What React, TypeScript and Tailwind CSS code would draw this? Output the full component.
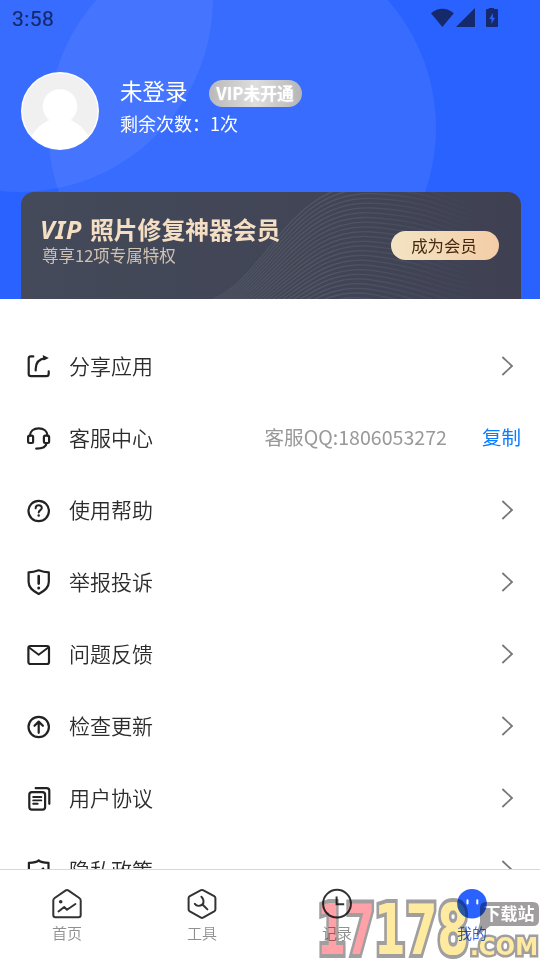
import React from "react";

type MenuItem = {
  label: string;
  icon: React.ReactNode;
  info?: string;
  action?: string;
};

type Tab = {
  label: string;
  icon: React.ReactNode;
  active?: boolean;
};

const Icon = ({ children }: { children: React.ReactNode }) => (
  <svg
    width="26"
    height="26"
    viewBox="0.3 0 26 26"
    fill="none"
    stroke="#222"
    strokeWidth="2.2"
    strokeLinecap="round"
    strokeLinejoin="round"
    className="shrink-0"
  >
    {children}
  </svg>
);

const menu: MenuItem[] = [
  {
    label: "分享应用",
    icon: (
      <Icon>
        <path d="M7.6 3.4H5.2Q3 3.4 3 5.6V21Q3 23.2 5.4 23.2H20.6Q23 23.2 23 20.8V18.4" />
        <path d="M10 17.4V16C10 10 13.5 6 20 5.2" />
        <path d="M17 2L23.2 5L17.8 7.6Z" fill="#222" stroke="none" />
      </Icon>
    ),
  },
  {
    label: "客服中心",
    info: "客服QQ:1806053272",
    action: "复制",
    icon: (
      <Icon>
        <path d="M4.2 10.8C4.4 6.2 8 3.4 13 3.4S21.6 6.2 21.8 10.8" />
        <rect x="2.4" y="10.6" width="5" height="7.4" rx="1.4" />
        <rect x="18.2" y="10.6" width="5.2" height="7.4" rx="1.4" />
        <path d="M20.8 18.4C20.4 22 17 23.6 10.5 23.6" />
      </Icon>
    ),
  },
  {
    label: "使用帮助",
    icon: (
      <Icon>
        <circle cx="13" cy="14" r="10.2" />
        <path
          d="M9.9 11.4C9.9 9.4 11.3 8.3 13 8.3S16.1 9.4 16.1 11.1C16.1 13.1 13 13.2 13 15.6"
          strokeWidth="1.9"
        />
        <circle cx="13" cy="18.5" r="1.2" fill="#222" stroke="none" />
      </Icon>
    ),
  },
  {
    label: "举报投诉",
    icon: (
      <Icon>
        <path d="M13 1.3Q18 3.2 23.1 3.3V13C23.1 18.5 19.5 21.5 13 25C6.5 21.5 2.9 18.5 2.9 13V3.3Q8 3.2 13 1.3Z" />
        <path d="M13 7V14.6" strokeWidth="2.6" />
        <circle cx="13" cy="19" r="1.5" fill="#222" stroke="none" />
      </Icon>
    ),
  },
  {
    label: "问题反馈",
    icon: (
      <Icon>
        <rect x="2.7" y="5" width="20.6" height="18" rx="2" />
        <path d="M3.4 6.6L13 13.8L22.6 6.6" strokeWidth="1.9" />
      </Icon>
    ),
  },
  {
    label: "检查更新",
    icon: (
      <Icon>
        <circle cx="13" cy="14" r="10.2" />
        <path d="M13 19.8V9M8.8 12.8L13 8.6L17.2 12.8" />
      </Icon>
    ),
  },
  {
    label: "用户协议",
    icon: (
      <Icon>
        <rect x="3.6" y="7.2" width="15.8" height="17.4" rx="2.6" />
        <path d="M10 3.2H21Q23.6 3.2 23.6 5.8V18.8" />
        <path d="M7.5 12H15.6M7.5 15.4H15.6M7.5 18.8H12" strokeWidth="1.9" />
      </Icon>
    ),
  },
  {
    label: "隐私政策",
    icon: (
      <Icon>
        <path d="M13 3.4Q15.4 5.8 22.8 5.8V15C22.8 19 19 22 13 24.5C7 22 3.2 19 3.2 15V5.8Q10.6 5.8 13 3.4Z" />
        <path d="M8.5 14L12 17L17.5 11.5" />
      </Icon>
    ),
  },
];

const TabIcon = ({ children }: { children: React.ReactNode }) => (
  <svg
    width="32"
    height="32"
    viewBox="0 0 32 32"
    fill="none"
    stroke="#333"
    strokeWidth="2"
    strokeLinecap="round"
    strokeLinejoin="round"
  >
    {children}
  </svg>
);

const tabs: Tab[] = [
  {
    label: "首页",
    icon: (
      <TabIcon>
        <path d="M2.3 12.6Q2.3 11 3.7 10L14.4 2.6Q16 1.6 17.6 2.6L28.3 10Q29.7 11 29.7 12.6V27Q29.7 29.2 27.5 29.2H4.5Q2.3 29.2 2.3 27Z" />
        <circle cx="9.7" cy="13.8" r="1.8" fill="#333" stroke="none" />
        <path d="M7.5 23.5L13.2 19L16 21.8L24.4 16" />
      </TabIcon>
    ),
  },
  {
    label: "工具",
    icon: (
      <TabIcon>
        <path d="M15 2.2Q16 1.6 17 2.2L28.2 8.2Q29.4 8.9 29.4 10.1V21.5Q29.4 22.7 28.2 23.4L17 29.6Q16 30.2 15 29.6L3.8 23.4Q2.6 22.7 2.6 21.5V10.1Q2.6 8.9 3.8 8.2Z" />
        <path d="M15.4 8.8C18 11.2 18.2 15 16.2 16.6C14 18.3 10.8 18.3 8.8 15.8M17 17L21.4 21.4" />
      </TabIcon>
    ),
  },
  {
    label: "记录",
    icon: (
      <TabIcon>
        <circle cx="16" cy="15.7" r="13.9" />
        <path d="M15.6 8.5V16.2H23.2" strokeLinecap="butt" strokeLinejoin="miter" />
      </TabIcon>
    ),
  },
  {
    label: "我的",
    active: true,
    icon: (
      <TabIcon>
        <circle cx="16" cy="15.7" r="14.8" fill="#2962ff" stroke="none" />
        <path d="M11.5 12.2V15.4M21.3 12.2V15.4" stroke="#fff" />
      </TabIcon>
    ),
  },
];

const waves = Array.from({ length: 34 }, (_, i) => i);

function StatusBar() {
  return (
    <div className="flex h-9 items-center justify-between pr-[41px] pl-3 text-[#15296b]">
      <span className="pt-0.5 font-[Roboto] text-[21px] leading-none tracking-[0.4px] [-webkit-text-stroke:0.2px_#15296b]">
        3:58
      </span>
      <svg width="68" height="20" viewBox="0 0 68 20" fill="currentColor">
        <path d="M0 5.2Q11.4 -3.6 22.8 5.2L11.4 19Z" />
        <path d="M25 19L44 0V19Z" />
        <path d="M57.8 -1H63V1H66.2Q67 1 67 1.8V18.2Q67 19 66.2 19H55.8Q55 19 55 18.2V1.8Q55 1 55.8 1H57.8Z" />
        <path d="M62 5L58.3 11H60.6L60.4 16L64 9.8H61.7Z" fill="#2b62ff" />
      </svg>
    </div>
  );
}

function VipCard() {
  return (
    <div className="relative mr-[19px] ml-[21px] mt-[42px] flex h-[107px] justify-between overflow-hidden rounded-t-[13px] bg-linear-to-r from-[#444a59] to-[#3f4153]">
      <svg
        className="absolute inset-0"
        width="500"
        height="107"
        viewBox="21 192 500 107"
        fill="none"
      >
        <defs>
          <linearGradient
            id="wave"
            gradientUnits="userSpaceOnUse"
            x1="200"
            y1="0"
            x2="480"
            y2="0"
          >
            <stop offset="0" stopColor="#8b9096" stopOpacity="0.12" />
            <stop offset="0.45" stopColor="#8b9096" stopOpacity="0.24" />
            <stop offset="1" stopColor="#8b9096" stopOpacity="0" />
          </linearGradient>
        </defs>
        {waves.map((i) => (
          <path
            key={i}
            d={`M205 ${302 + i * 1.6}C${265 + i} ${286 + i * 2.4} ${285 + i} ${182 + i * 4.4} 372 ${184 + i * 4.8}S450 ${214 + i * 4.8} 520 ${208 + i * 4.8}`}
            stroke="url(#wave)"
            strokeWidth="1.3"
          />
        ))}
      </svg>
      <div className="relative pt-[22px] pl-[19px] text-[#f5dfc4]">
        <div className="flex h-[30px] items-center text-[23.8px] leading-none font-bold whitespace-nowrap">
          <span className="w-[50px] font-['Noto_Sans'] text-[25px] italic tracking-[0.8px]">VIP</span>
          <span>照片修复神器会员</span>
        </div>
        <p className="pl-[2px] text-[16.5px] leading-[22px] text-[#cfc2b3]">
          尊享12项专属特权
        </p>
      </div>
      <button className="relative mt-[39px] mr-[22px] h-[29px] w-[108px] rounded-full bg-linear-to-r from-[#f3e4c4] to-[#f4cda6] pr-0.5 text-[16.4px] leading-[29px] text-[#44280f]">
        成为会员
      </button>
    </div>
  );
}

function Header() {
  return (
    <header className="relative h-[299px] shrink-0 overflow-hidden bg-[#2a62ff]">
      <svg className="absolute inset-0" width="540" height="192">
        <circle cx="242" cy="128" r="194" fill="#fff" fillOpacity="0.065" />
        <circle cx="19" cy="-2" r="194" fill="#fff" fillOpacity="0.065" />
      </svg>
      <div className="relative">
        <StatusBar />
        <div className="mt-9 flex h-[78px] pl-[21px]">
          <svg width="78" height="78" viewBox="0 0 78 78">
            <defs>
              <clipPath id="avatar">
                <circle cx="39" cy="39" r="38" />
              </clipPath>
            </defs>
            <circle cx="39" cy="39" r="39" fill="#fff" />
            <circle cx="39" cy="39" r="37.6" fill="#f0f0f0" />
            <g clipPath="url(#avatar)" fill="#fff">
              <circle cx="39" cy="34.5" r="17.3" />
              <path d="M11 63C18 53 25 49 30 47.5H48C53 49 60 53 67 63L60 78H18Z" />
            </g>
          </svg>
          <div className="pl-[21px] text-white">
            <div className="flex h-[38px] items-start">
              <span className="text-[22.5px] leading-[36px]">未登录</span>
              <span className="mt-2 ml-[21px] flex h-[27px] w-[93px] items-center justify-center rounded-full bg-linear-to-r from-[#b9b9b9] via-[#dedede] to-[#b5b5b5] text-[16.8px] font-bold whitespace-nowrap [text-shadow:0_0_2px_#ffffff90]">
                VIP未开通
              </span>
            </div>
            <p className="text-[18px] leading-[26px]">剩余次数：1次</p>
          </div>
        </div>
        <VipCard />
      </div>
    </header>
  );
}

function Watermark() {
  return (
    <svg
      className="pointer-events-none absolute right-0 bottom-0 mix-blend-multiply"
      width="226"
      height="62"
      viewBox="0 0 226 62"
      stroke="#a09e9e"
      strokeLinejoin="miter"
      fontFamily="'DejaVu Sans', sans-serif"
      fontWeight="700"
    >
      <path
        d="M172 4H219Q225 4 225 10V22Q225 28 219 28H176L162 39L166 24V10Q166 4 172 4Z"
        fill="#a09e9e"
        stroke="none"
      />
      <g fontSize="69" strokeWidth="8" paintOrder="stroke">
        <text x="3" y="56" textLength="58" lengthAdjust="spacingAndGlyphs" fill="#ffa1a7">
          17
        </text>
        <text x="60" y="56" textLength="95" lengthAdjust="spacingAndGlyphs" fill="#ffeba0">
          178
        </text>
      </g>
      <text
        x="156"
        y="57"
        fontSize="25"
        strokeWidth="5"
        paintOrder="stroke"
        textLength="68"
        lengthAdjust="spacingAndGlyphs"
        fill="#ffeba0"
      >
        .COM
      </text>
      <text
        x="169.5"
        y="22"
        fontSize="17"
        fontFamily="'Noto Sans CJK SC', sans-serif"
        fill="#fff"
        stroke="none"
      >
        下载站
      </text>
    </svg>
  );
}

export default function App() {
  return (
    <div className="relative flex h-[960px] w-[540px] flex-col overflow-hidden bg-white font-['Noto_Sans_CJK_SC',sans-serif]">
      <Header />

      {/* Menu list */}
      <main className="min-h-0 flex-1 overflow-hidden pt-[31px]">
        {menu.map((item) => (
          <div key={item.label} className="flex h-[72px] items-center pr-[19px] pl-[26px]">
            {item.icon}
            <span className="ml-[17px] flex-1 pb-0.5 text-[21px] leading-none font-[350] text-[#2c2c2c]">
              {item.label}
            </span>
            {item.info && (
              <span className="pb-0.5 text-[19.6px] leading-none text-[#999]">{item.info}</span>
            )}
            {item.action ? (
              <button className="ml-[35px] pb-0.5 text-[19.5px] leading-none text-[#0a7cff]">
                {item.action}
              </button>
            ) : (
              <svg
                className="mr-[7px]"
                width="13"
                height="20"
                viewBox="0 0 13 20"
                fill="none"
                stroke="#777"
                strokeWidth="1.8"
              >
                <path d="M1.4 1L11 10L1.4 19" />
              </svg>
            )}
          </div>
        ))}
      </main>

      {/* Bottom tabs */}
      <nav className="flex h-[91px] shrink-0 border-t border-[#d8d8d8] bg-white">
        {tabs.map((tab) => (
          <div key={tab.label} className="flex flex-1 flex-col items-center pt-[18px] pr-px">
            {tab.icon}
            <span
              className={`mt-[3px] text-[15px] leading-[20px] font-[350] ${
                tab.active ? "text-[#2962ff]" : "text-[#909090]"
              }`}
            >
              {tab.label}
            </span>
          </div>
        ))}
      </nav>

      <Watermark />
    </div>
  );
}
